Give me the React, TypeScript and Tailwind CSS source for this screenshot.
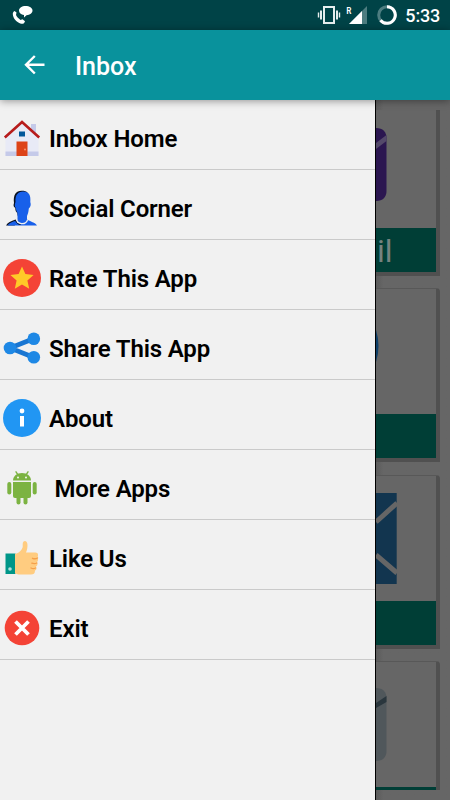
import type { ReactNode } from 'react';

const HomeIcon = () => (
  <svg width="38" height="38" viewBox="0 0 38 38">
    <path d="M28 5h5v13h-5z" fill="#c5cae9" />
    <path d="M19 4 2.500 19V37h33V19z" fill="#e8eaf6" />
    <path d="M2.500 32.500h33V37h-33z" fill="#c5cae9" />
    <path d="M13.500 22.500h11V37h-11z" fill="#dd4318" />
    <circle cx="22" cy="30.500" r="0.900" fill="#ff9a70" />
    <path d="M16 12.500h6v5h-6z" fill="#01579b" />
    <path d="M1.800 18.500 19 3l17.200 15.500" fill="none" stroke="#b71c1c" strokeWidth="2.600" />
  </svg>
);

const PersonIcon = () => (
  <svg width="38" height="38" viewBox="0 0 38 38">
    <path
      d="M11 14C10 6 13 1.800 18.500 1.800c3 0 5 .5 6 2L18 30c-3-1-3.500-3-3.700-6-1.500-1-2-3-2-5-2-1-2-3-1.300-5zM3 36.500c1.500-3 5-4.500 9.500-6l3 3-4 3z"
      fill="#0a1222"
    />
    <path
      d="M12.500 13C12 6 15 2.500 20 2.500c6 0 8 4 7.300 10.500 1 3 .2 5-1.500 6.500-.3 4-1 5.500-1.800 7.500v3.500c3 2 8.500 3 10 6H4.500c1.500-2.500 5-4 10-5V24c-1-1.500-1.500-3.500-1.700-5-1.500-1.500-1-4-.3-6z"
      fill="#1860ea"
    />
    <path d="M13.500 30.500c1 5 9 6 11 .5" fill="none" stroke="#f1f1f1" strokeWidth="1.300" />
    <path d="M12.500 31.500c1 3 3 4 5 4" fill="none" stroke="#0a1222" strokeWidth="1" />
  </svg>
);

const StarIcon = () => (
  <svg width="38" height="38" viewBox="0 0 38 38">
    <circle cx="19" cy="19" r="19" fill="#f44336" />
    <path d="m19 7.500 3.400 7.600 8.200.9-6.200 5.500 1.800 8.200-7.200-4.200-7.200 4.200 1.800-8.200L7.400 16l8.200-.9z" fill="#ffca28" />
  </svg>
);

const ShareIcon = () => (
  <svg width="38" height="38" viewBox="0 0 38 38">
    <path d="M31 9.500 7 19l24 9.500" fill="none" stroke="#1976d2" strokeWidth="4.600" />
    <g fill="#1e88e5">
      <circle cx="7" cy="19" r="6.300" />
      <circle cx="30.800" cy="9.800" r="6.300" />
      <circle cx="30.800" cy="28.200" r="6.300" />
    </g>
  </svg>
);

const InfoIcon = () => (
  <svg width="38" height="38" viewBox="0 0 38 38">
    <circle cx="19" cy="19" r="19" fill="#2196f3" />
    <circle cx="19" cy="12" r="2.400" fill="#fff" />
    <path d="M17 17h4v10.500h-4z" fill="#fff" />
  </svg>
);

const AndroidIcon = () => (
  <svg width="38" height="38" viewBox="0 0 38 38">
    <g fill="#7cb342">
      <path d="M10 11.500C10 7 14 4 19 4s9 3 9 7.500z" />
      <path d="M10 13h18v14a2 2 0 0 1-2 2H12a2 2 0 0 1-2-2z" />
      <rect x="4.300" y="13" width="4" height="12.500" rx="2" />
      <rect x="29.700" y="13" width="4" height="12.500" rx="2" />
      <rect x="13.500" y="24" width="4" height="11.500" rx="2" />
      <rect x="20.500" y="24" width="4" height="11.500" rx="2" />
      <path d="m13 2.800 2 3M25 2.800l-2 3" stroke="#7cb342" strokeWidth="1.400" strokeLinecap="round" />
    </g>
    <circle cx="15" cy="8.500" r="0.900" fill="#fff" />
    <circle cx="23" cy="8.500" r="0.900" fill="#fff" />
  </svg>
);

const ThumbIcon = () => (
  <svg width="38" height="38" viewBox="0 0 38 38">
    <path d="M2.500 14.500H12.500V35H2.500z" fill="#009688" />
    <circle cx="7" cy="30" r="1.800" fill="#b2dfdb" />
    <path
      d="M12 34.500V15c4-1 7-4 7.700-7V5c0-4 4.800-4 4.800 1 0 3-.5 5-1.500 7.500h8.500c3 0 4.500 1 3 5 1 2 .5 3.500-.5 4.500 1 2 .5 3.500-1 4.500 1 2 .5 3.500-1 4 0 3-1.500 4-4 4h-11c-2 0-3-.5-5-1z"
      fill="#ffcc80"
    />
    <path
      d="M34.500 19c-1.500 1-3 1-5 .3M33.800 24c-1.500.8-3 .8-5 .2M32.500 29c-1.500.8-3 .8-4.500 0"
      fill="none"
      stroke="#f5a04a"
      strokeWidth="1.400"
      strokeLinecap="round"
    />
  </svg>
);

const ExitIcon = () => (
  <svg width="38" height="38" viewBox="0 0 38 38">
    <circle cx="19" cy="19" r="17.300" fill="#f44336" />
    <path d="m12.500 12.500 13 13M25.500 12.500l-13 13" stroke="#fff" strokeWidth="3.800" />
  </svg>
);

const menuItems: { label: string; icon: ReactNode; indent?: boolean }[] = [
  { label: 'Inbox Home', icon: <HomeIcon /> },
  { label: 'Social Corner', icon: <PersonIcon /> },
  { label: 'Rate This App', icon: <StarIcon /> },
  { label: 'Share This App', icon: <ShareIcon /> },
  { label: 'About', icon: <InfoIcon /> },
  { label: 'More Apps', icon: <AndroidIcon />, indent: true },
  { label: 'Like Us', icon: <ThumbIcon /> },
  { label: 'Exit', icon: <ExitIcon /> },
];

const StatusBar = () => (
  <div className="flex h-[30px] items-center justify-between bg-[#004347] pl-3 pr-[10px]">
    <svg width="22" height="20" viewBox="0 0 22 20" fill="#fff">
      <path d="M2.500 6 4.500 7.500 4 10c1 2 2.500 3.500 4.500 5l2-.8 2.500 2c-.5 2-2 3-4 2.500C4 17 1 13 .8 9 .8 7.500 1.500 6.500 2.500 6z" />
      <path d="M13.500 1c4 0 7 1.800 7 4.500S18 10 14.500 10.200L12 12.500V10C9 9.500 7 8 7 5.500 7 2.800 10 1 13.500 1z" />
    </svg>
    <div className="flex items-center">
      <svg width="24" height="20" viewBox="0 0 24 20" fill="none" stroke="#e5eeee" strokeWidth="2">
        <path d="M7 2h10v16H7z" />
        <path d="M4 5.500v9M20 5.500v9" />
        <path d="M1.500 7.500v5M22.500 7.500v5" strokeWidth="1.400" />
      </svg>
      <span className="-mt-2 ml-[5px] w-[4px] font-['Roboto_Condensed','Roboto',sans-serif] text-[9.500px] font-medium leading-none text-white">
        R
      </span>
      <svg className="-ml-px" width="18" height="20" viewBox="0 0 18 20">
        <path d="M0 19 18 1v18z" fill="#4d7d80" />
        <path d="M0 19 13 6v13z" fill="#fff" />
      </svg>
      <svg className="ml-[10px]" width="20" height="20" viewBox="0 0 20 20" fill="none" strokeWidth="3">
        <circle cx="10" cy="10" r="8.300" stroke="#4d7d80" />
        <path d="M10 1.700a8.300 8.300 0 1 1-6.500 13.500" stroke="#fff" />
      </svg>
      <span className="ml-[8px] mt-px text-[18px] font-medium leading-none tracking-[-0.200px] text-white">5:33</span>
    </div>
  </div>
);

const Header = () => (
  <header className="relative z-10 flex h-[70px] items-center bg-[#09929c] shadow-[0_1px_8px_rgba(0,0,0,0.4)]">
    <svg className="ml-6" width="21" height="20" viewBox="0 0 21 20" fill="none" stroke="#fff" strokeWidth="2.400">
      <path d="M20.500 9.700H2M10.800 1 2 9.700l8.800 8.800" />
    </svg>
    <h1 className="ml-[30px] mt-[2px] text-[25px] font-medium leading-none text-white">Inbox</h1>
  </header>
);

type CardProps = { className: string; footer?: ReactNode; children: ReactNode };

const Card = ({ className, footer, children }: CardProps) => (
  <div className={`flex w-16 shrink-0 flex-col border-b-4 border-r-4 border-[#505050] bg-[#666] ${className}`}>
    <div className="min-h-0 flex-1">{children}</div>
    <div className="h-[44px] shrink-0 bg-[#003e36]">{footer}</div>
  </div>
);

const Cards = () => (
  <div className="mt-[10px] flex h-[680px] flex-col gap-3 overflow-hidden">
    <Card
      className="h-[166px]"
      footer={<span className="ml-px block text-[32px] font-normal leading-[46px] text-[#75827f]">il</span>}
    >
      <svg width="12" height="118" viewBox="0 0 12 118">
        <path d="M0 18c7 0 10.500 4 10.500 10v53c0 6-3.500 10-10.500 10z" fill="#2b1650" />
        <path d="m0 33 10.500-8v6L0 39z" fill="#54496a" />
      </svg>
    </Card>
    <Card className="h-[174px] rounded-tr-sm border-t border-t-[#585858]">
      <svg width="5" height="80" viewBox="0 0 5 80">
        <path d="M0 41q5 16 0 32z" fill="#0d3f69" />
      </svg>
    </Card>
    <Card className="mt-px h-[174px] rounded-tr-sm border-t border-t-[#585858]">
      <svg width="22" height="120" viewBox="0 0 22 120">
        <path d="M0 17h20.700v91H0z" fill="#12354f" />
        <path d="m0 46 21-19M0 79l21 18" stroke="#666" strokeWidth="5" />
      </svg>
    </Card>
    <Card className="h-[174px] rounded-tr-sm border-t border-t-[#585858]">
      <svg width="12" height="110" viewBox="0 0 12 110">
        <path d="M0 26c7 0 10.500 4 10.500 10v53c0 6-3.500 10-10.500 10z" fill="#50575b" />
        <path d="m0 41 10.500-7v6L0 46z" fill="#2a363d" />
      </svg>
    </Card>
  </div>
);

export default function App() {
  return (
    <div className="flex h-[800px] w-[450px] flex-col overflow-hidden font-['Roboto',sans-serif]">
      <StatusBar />
      <Header />
      <div className="flex min-h-0 flex-1 bg-[#666]">
        <nav className="w-[376px] shrink-0 border-r border-black bg-[#f1f1f1]">
          {menuItems.map((item) => (
            <div key={item.label} className="flex h-[70px] items-center border-b border-[#cacaca] pl-[3px] pt-[7px]">
              {item.icon}
              <span
                className={`mt-[2px] text-[24px] font-semibold leading-none tracking-[-0.140px] text-black ${item.indent ? 'ml-[13.500px]' : 'ml-[8px]'}`}
              >
                {item.label}
              </span>
            </div>
          ))}
        </nav>
        <div className="flex-1 bg-linear-to-r from-[#5b5b5b] to-[#666] to-10%">
          <Cards />
        </div>
      </div>
    </div>
  );
}
